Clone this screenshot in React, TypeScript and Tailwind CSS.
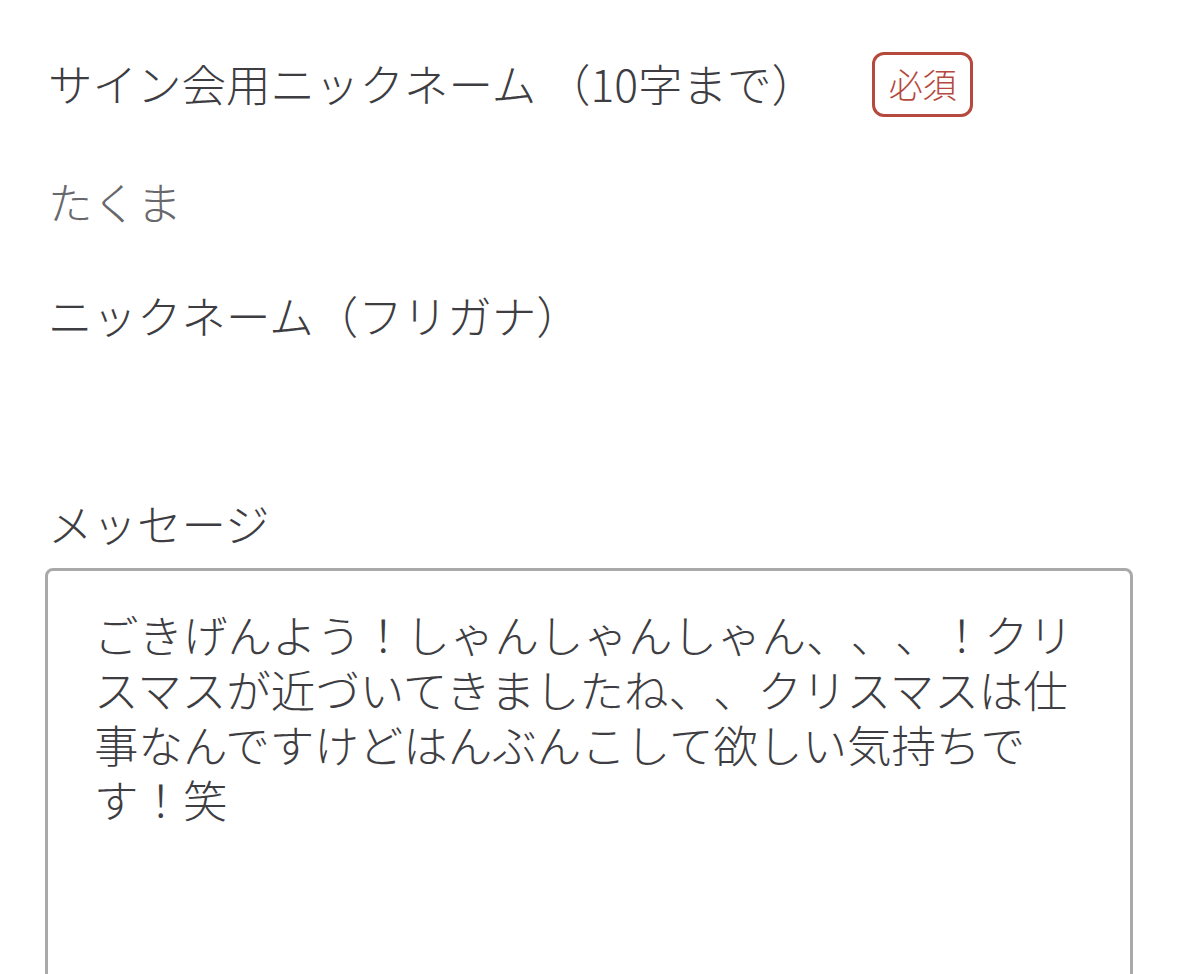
import React from 'react';

const font = { fontFamily: '"Noto Sans CJK JP", "Noto Sans", sans-serif' };

const messageLines = [
  'ごきげんよう！しゃんしゃんしゃん、、、！クリ',
  'スマスが近づいてきましたね、、クリスマスは仕',
  '事なんですけどはんぶんこして欲しい気持ちで',
  'す！笑',
];

export default function App() {
  return (
    <div
      className="h-[974px] overflow-hidden bg-white text-[#3d3d42] font-light [text-spacing-trim:space-all]"
      style={font}
    >
      <div className="pt-[51px] flex flex-col">
        {/* nickname label + required badge */}
        <div className="flex items-center h-[64px] pl-[48px]">
          <span className="text-[44.5px] leading-[56px]">サイン会用ニックネーム （10字まで）</span>
          <span className="ml-[56px] mt-[2px] w-[101px] h-[65px] flex items-center justify-center rounded-[12px] border-[3px] border-[#b5493e] text-[#b5493e] text-[34px] leading-none">
            必須
          </span>
        </div>

        {/* nickname value */}
        <div className="mt-[58px] h-[56px] pl-[48px] flex items-center text-[44.5px] leading-[56px] text-[#68686c]">
          たくま
        </div>

        {/* furigana label */}
        <div className="mt-[58px] h-[56px] pl-[48px] flex items-center text-[44.5px] leading-[56px]">
          ニックネーム（フリガナ）
        </div>

        {/* furigana value (empty) */}
        <div className="h-[152px]" />

        {/* message label */}
        <div className="h-[56px] pl-[48px] flex items-center text-[44.5px] leading-[56px]">
          メッセージ
        </div>

        {/* message box */}
        <div className="mt-[17px] ml-[45px] w-[1088px] h-[460px] rounded-[8px] border-[3px] border-[#a9a9a9] pt-[35px] pl-[46px] text-[44.5px] leading-[55px]">
          {messageLines.map((line) => (
            <div key={line} className="whitespace-nowrap">{line}</div>
          ))}
        </div>
      </div>
    </div>
  );
}
